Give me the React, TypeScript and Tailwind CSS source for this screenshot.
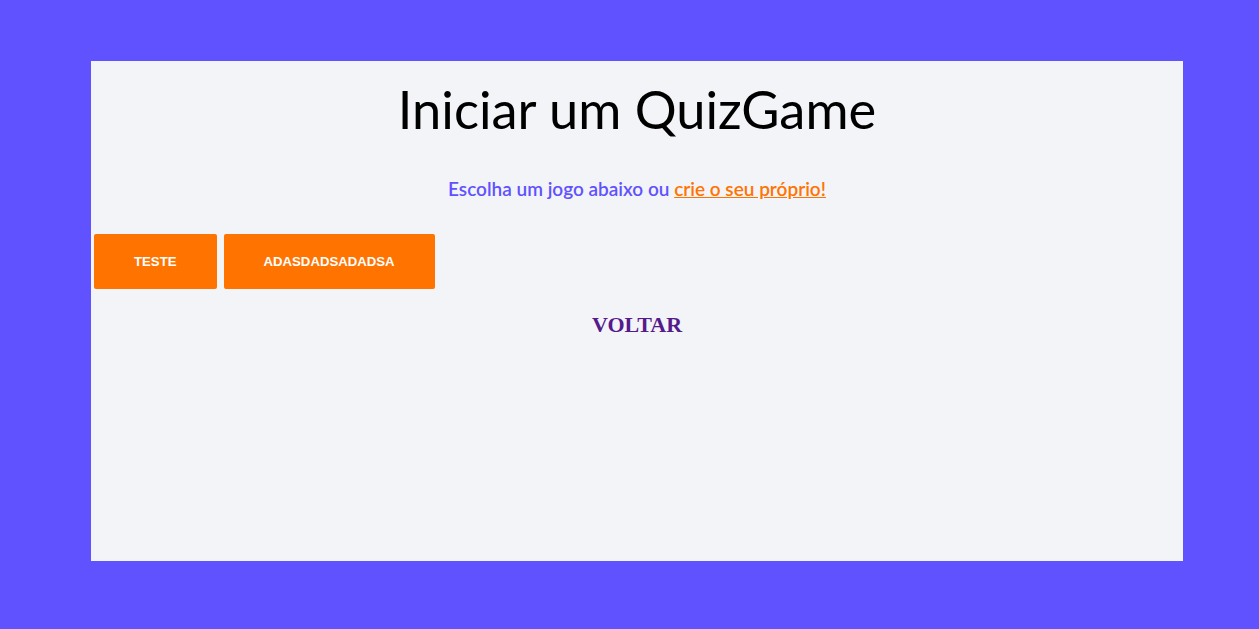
export default function App() {
  const games = ["TESTE", "ADASDADSADADSA"];

  return (
    <div className="w-full h-[629px] bg-[#6052ff] pt-[61px] pl-[91px]">
      <div className="w-[1092px] h-[500px] bg-[#f3f4f8] flex flex-col">
        {/* Titulo */}
        <h1 className="text-center text-black text-[52.4px] leading-none mt-[22px] font-['Lato',sans-serif]">
          Iniciar um QuizGame
        </h1>

        <p className="text-center mt-[42px] text-[19px] leading-[24px] font-semibold text-[#6052ff] font-['Lato',sans-serif]">
          Escolha um jogo abaixo ou{" "}
          <a href="#" className="text-[#ff7300] underline">
            crie o seu próprio!
          </a>
        </p>

        {/* Lista de jogos */}
        <div className="flex gap-[7px] pl-[3px] mt-[33px]">
          {games.map((g) => (
            <button
              key={g}
              className="h-[55px] px-[40px] bg-[#ff7300] rounded-[2px] text-white text-[13.2px] font-bold font-['Liberation_Sans',Arial,sans-serif]"
            >
              {g}
            </button>
          ))}
        </div>

        <a
          href="#"
          className="self-center mt-[23px] text-[#551a8b] text-[22px] leading-[26px] font-bold font-['Liberation_Serif','Times_New_Roman',serif]"
        >
          VOLTAR
        </a>
      </div>
    </div>
  );
}
